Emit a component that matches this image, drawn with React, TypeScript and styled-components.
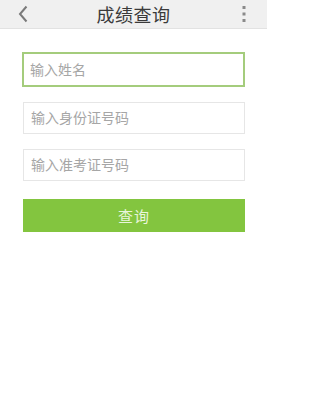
import styled, { createGlobalStyle } from "styled-components"
import React from "react"

const GlobalStyle = createGlobalStyle`
  html, body {
    margin: 0;
    padding: 0;
    background: #ffffff;
    font-family: "Liberation Sans", "Noto Sans CJK SC", sans-serif;
  }
`

const Page = styled.div`
  width: 267px;
  min-height: 402px;
  background: #ffffff;
`

const Header = styled.div`
  height: 28px;
  display: flex;
  align-items: center;
  justify-content: space-between;
  padding: 0 17px;
  background: #f0f0f0;
  border-bottom: 1px solid #e2e2e2;
`

const Title = styled.div`
  font-size: 18px;
  color: #3a3a3a;
  letter-spacing: 0.5px;
`

const IconSlot = styled.div`
  width: 12px;
  height: 20px;
  display: flex;
  align-items: center;
  justify-content: center;
`

const Form = styled.form`
  display: flex;
  flex-direction: column;
  gap: 15px;
  padding: 23px 22px 0 22px;
`

const Input = styled.input<{ $active?: boolean }>`
  box-sizing: border-box;
  height: ${(p) => (p.$active ? "35px" : "32px")};
  margin: ${(p) => (p.$active ? "0" : "0 0 0 1px")};
  width: ${(p) => (p.$active ? "100%" : "222px")};
  padding: 0 ${(p) => (p.$active ? "6px" : "7px")};
  border: ${(p) => (p.$active ? "2px solid #a4cc7c" : "1px solid #e6e6e6")};
  outline: none;
  background: #ffffff;
  font-family: "Liberation Sans", "Noto Sans CJK SC", sans-serif;
  font-size: 14px;
  color: #333;
  &::placeholder {
    color: #a6a6a6;
  }
`

const Button = styled.button`
  box-sizing: border-box;
  height: 33px;
  margin: 3px 0 0 1px;
  width: 222px;
  border: none;
  background: #83c53f;
  color: #e9f5dc;
  font-family: "Liberation Sans", "Noto Sans CJK SC", sans-serif;
  font-size: 15px;
  letter-spacing: 1px;
`

const App: React.FC = () => {
  return (
    <Page>
      <GlobalStyle />
      <Header>
        <IconSlot>
          <svg width="10" height="18" viewBox="0 0 10 18">
            <path d="M8.5 1.5 L2 9 L8.5 16.5" fill="none" stroke="#7a7a7a" strokeWidth="2" />
          </svg>
        </IconSlot>
        <Title>成绩查询</Title>
        <IconSlot>
          <svg width="4" height="18" viewBox="0 0 4 18">
            <rect x="0.5" y="1" width="3" height="3" fill="#8a8a8a" />
            <rect x="0.5" y="7.5" width="3" height="3" fill="#8a8a8a" />
            <rect x="0.5" y="14" width="3" height="3" fill="#8a8a8a" />
          </svg>
        </IconSlot>
      </Header>
      <Form onSubmit={(e) => e.preventDefault()}>
        <Input $active placeholder="输入姓名" />
        <Input placeholder="输入身份证号码" />
        <Input placeholder="输入准考证号码" />
        <Button type="submit">查询</Button>
      </Form>
    </Page>
  )
}

export default App
